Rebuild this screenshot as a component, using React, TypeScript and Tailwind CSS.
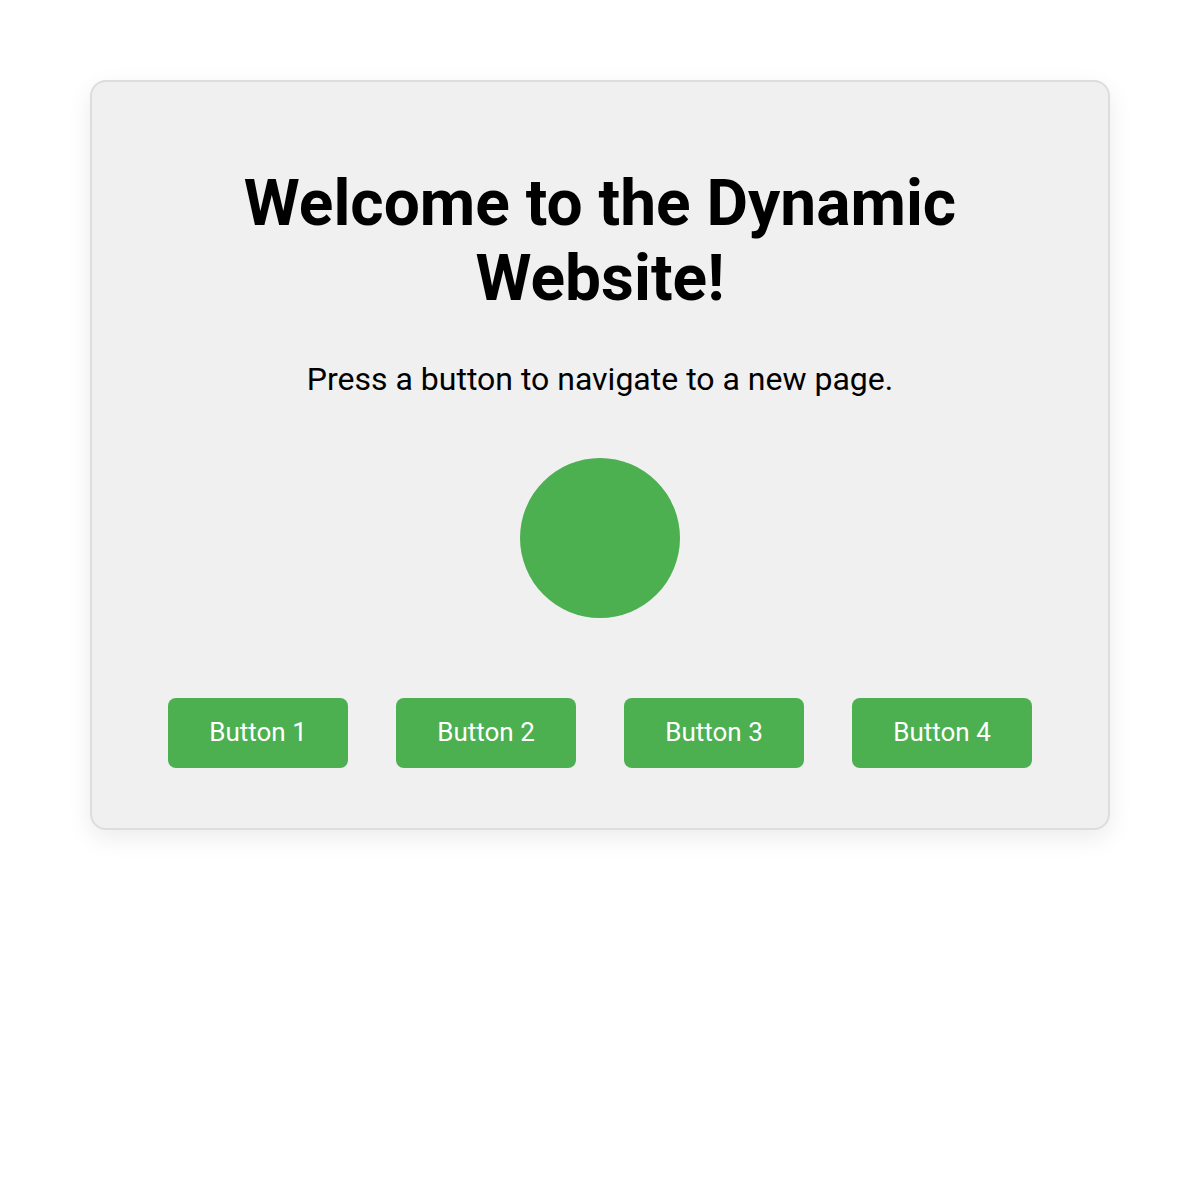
export default function App() {
  const buttons = ["Button 1", "Button 2", "Button 3", "Button 4"];
  return (
    <div
      className="min-h-[1200px] bg-white pt-[80px]"
      style={{ fontFamily: "Roboto, 'Noto Sans', sans-serif" }}
    >
      <div className="mx-auto flex w-[1020px] flex-col items-center rounded-[16px] border-2 border-[#dddddd] bg-[#f0f0f0] px-[40px] pt-[84px] pb-[60px] shadow-[0_8px_24px_rgba(0,0,0,0.08)]">
        <h1 className="text-center text-[64px] font-bold leading-[75px] text-black">
          Welcome to the Dynamic
          <br />
          Website!
        </h1>
        <p className="mt-[45px] text-[32px] leading-[37.5px] text-black">
          Press a button to navigate to a new page.
        </p>
        <div className="mt-[59px] h-[160px] w-[160px] rounded-full bg-[#4caf50]" />
        <div className="mt-[80px] flex gap-[48px]">
          {buttons.map((b) => (
            <button
              key={b}
              className="flex h-[70px] w-[180px] items-center justify-center rounded-[8px] bg-[#4caf50] text-[26px] text-white"
            >
              {b}
            </button>
          ))}
        </div>
      </div>
    </div>
  );
}
